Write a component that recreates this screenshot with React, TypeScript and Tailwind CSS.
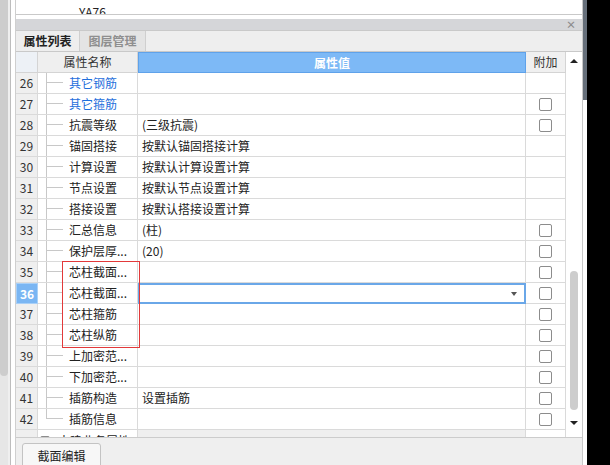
const rows = [
  { n: 26, name: "其它钢筋", val: "", blue: true, cb: false },
  { n: 27, name: "其它箍筋", val: "", blue: true, cb: true },
  { n: 28, name: "抗震等级", val: "(三级抗震)", cb: true },
  { n: 29, name: "锚固搭接", val: "按默认锚固搭接计算", cb: false },
  { n: 30, name: "计算设置", val: "按默认计算设置计算", cb: false },
  { n: 31, name: "节点设置", val: "按默认节点设置计算", cb: false },
  { n: 32, name: "搭接设置", val: "按默认搭接设置计算", cb: false },
  { n: 33, name: "汇总信息", val: "(柱)", cb: true },
  { n: 34, name: "保护层厚...", val: "(20)", cb: true },
  { n: 35, name: "芯柱截面...", val: "", cb: true },
  { n: 36, name: "芯柱截面...", val: "", cb: true, sel: true },
  { n: 37, name: "芯柱箍筋", val: "", cb: true },
  { n: 38, name: "芯柱纵筋", val: "", cb: true },
  { n: 39, name: "上加密范...", val: "", cb: true },
  { n: 40, name: "下加密范...", val: "", cb: true },
  { n: 41, name: "插筋构造", val: "设置插筋", cb: true },
  { n: 42, name: "插筋信息", val: "", cb: true, last: true },
];

const Checkbox = () => (
  <div className="w-[13px] h-[13px] border border-[#8c8c8c] rounded-[2px] bg-white"></div>
);

const App = () => {
  return (
    <div
      className="w-[610px] h-[465px] flex bg-white overflow-hidden text-[12px] text-[#222]"
      style={{ fontFamily: '"Noto Sans CJK SC", "Noto Sans", sans-serif' }}
    >
      {/* left strip */}
      <div className="w-[16px] h-full flex shrink-0">
        <div className="w-[8px] h-full flex flex-col bg-[#e6e6e6]">
          <div className="h-[376px] bg-[#cdcdcd] rounded-b-[4px]"></div>
        </div>
        <div className="w-[2px] bg-[#efefef]"></div>
        <div className="w-[1px] bg-[#bdbdbd]"></div>
        <div className="w-[4px] bg-white"></div>
        <div className="w-[1px] bg-[#cfcfcf]"></div>
      </div>

      {/* main panel */}
      <div className="w-[566px] h-full flex flex-col shrink-0">
        {/* top white area */}
        <div className="h-[15px] border-b border-[#c9c9c9] overflow-hidden shrink-0">
          <div className="pl-[63px] pt-[5px] leading-[14px] text-[#222]">YA76</div>
        </div>
        <div className="h-[4px] shrink-0"></div>
        {/* title bar */}
        <div className="h-[11px] bg-[#d5d6d9] flex items-center justify-end pr-[6px] shrink-0">
          <span className="text-[#8a8a8a] text-[10px] leading-[10px] font-bold">×</span>
        </div>
        {/* tabs */}
        <div className="h-[22px] bg-[#eeeeee] border-t border-b border-[#c9c9c9] flex shrink-0">
          <div className="w-[64px] flex items-center justify-center font-bold text-[#222] border-r border-[#cfcfcf]">
            属性列表
          </div>
          <div className="w-[66px] flex items-center justify-center font-bold text-[#8f8f8f] bg-[#e4e4e4] border-r border-[#cfcfcf]">
            图层管理
          </div>
        </div>

        {/* table + scrollbar */}
        <div className="h-[385px] flex shrink-0 overflow-hidden">
          <div className="w-[550px] relative overflow-hidden">
            {/* header */}
            <div className="grid grid-cols-[22px_100px_388px_40px] h-[21px]">
              <div className="bg-[#edf1f6] border-r border-b border-[#d4d4d4]"></div>
              <div className="bg-[#efefef] border-r border-b border-[#d4d4d4] flex items-center justify-center text-[#333]">
                属性名称
              </div>
              <div className="bg-[#7db9f6] border border-[#5fa2ea] flex items-center justify-center text-white font-bold">
                属性值
              </div>
              <div className="bg-[#f0f0f0] border-r border-b border-[#d4d4d4] flex items-center justify-center text-[#333]">
                附加
              </div>
            </div>

            {rows.map((r) => (
              <div key={r.n} className="grid grid-cols-[22px_100px_388px_40px] h-[21px]">
                <div
                  className={
                    r.sel
                      ? "bg-[#7ab6f3] border border-[#a9d0f7] flex items-center justify-center text-white font-bold"
                      : "bg-[#efefef] border-r border-b border-[#dadada] flex items-center justify-center text-[#333]"
                  }
                >
                  {r.n}
                </div>
                <div className="border-r border-b border-[#dadada] flex items-stretch">
                  <div className="w-[8px] shrink-0"></div>
                  <div className="w-[17px] shrink-0 flex flex-col">
                    <div className="h-[10px] border-l border-b border-[#c8c8c8]"></div>
                    <div className={r.last ? "flex-1" : "flex-1 border-l border-[#c8c8c8]"}></div>
                  </div>
                  <div
                    className={
                      "pl-[6px] flex items-center whitespace-nowrap " +
                      (r.blue ? "text-[#1f6fdc]" : "text-[#222]")
                    }
                  >
                    {r.name}
                  </div>
                </div>
                {r.sel ? (
                  <div className="border-2 border-[#6aa7e8] flex items-center justify-end pr-[7px]">
                    <div className="w-0 h-0 border-l-[3px] border-r-[3px] border-t-[4px] border-l-transparent border-r-transparent border-t-[#555]"></div>
                  </div>
                ) : (
                  <div className="border-r border-b border-[#dadada] flex items-center pl-[4px] whitespace-nowrap">
                    {r.val}
                  </div>
                )}
                <div className="border-r border-b border-[#dadada] flex items-center justify-center">
                  {r.cb ? <Checkbox /> : null}
                </div>
              </div>
            ))}

            {/* row 43, partially visible */}
            <div className="grid grid-cols-[22px_100px_388px_40px] h-[21px]">
              <div className="bg-[#efefef] border-r border-[#dadada] flex items-center justify-center text-[#333]">
                43
              </div>
              <div className="border-r border-[#dadada] flex items-center pl-[2px]">
                <div className="w-[10px] h-[10px] border border-[#8c8c8c] rounded-[2px] bg-white"></div>
                <span className="pl-[8px] whitespace-nowrap">土建业务属性</span>
              </div>
              <div className="bg-[#efefef] border-r border-[#dadada]"></div>
              <div className="border-r border-[#dadada]"></div>
            </div>

            {/* red highlight box */}
            <div className="absolute left-[46px] top-[209px] w-[78px] h-[87px] border border-[#e2393a]"></div>
          </div>

          {/* vertical scrollbar */}
          <div className="w-[16px] flex flex-col items-center bg-white">
            <div className="h-[21px] flex items-center justify-center">
              <div className="w-0 h-0 border-l-[4px] border-r-[4px] border-b-[4px] border-l-transparent border-r-transparent border-b-[#222] -mt-[4px]"></div>
            </div>
            <div className="h-[198px]"></div>
            <div className="w-[8px] h-[139px] bg-[#cdcdcd] rounded-[4px]"></div>
            <div className="h-[19px] flex items-center justify-center">
              <div className="w-0 h-0 border-l-[4px] border-r-[4px] border-t-[4px] border-l-transparent border-r-transparent border-t-[#222] mt-[6px]"></div>
            </div>
          </div>
        </div>

        {/* bottom bar */}
        <div className="flex-1 bg-[#efefef] border-t border-[#cccccc] pl-[6px] pt-[5px]">
          <div className="w-[79px] h-[30px] border border-[#c3c3c3] rounded-[3px] bg-[#f7f7f7] flex justify-center pt-[3px] text-[#222]">
            截面编辑
          </div>
        </div>
      </div>

      {/* right strip */}
      <div className="w-[28px] h-full flex shrink-0">
        <div className="w-[1px] bg-[#c9c9c9]"></div>
        <div className="w-[4px] flex flex-col bg-white">
          <div className="h-[100px] bg-[#666f7a]"></div>
        </div>
        <div className="flex-1 bg-black"></div>
      </div>
    </div>
  );
};

export default App;
